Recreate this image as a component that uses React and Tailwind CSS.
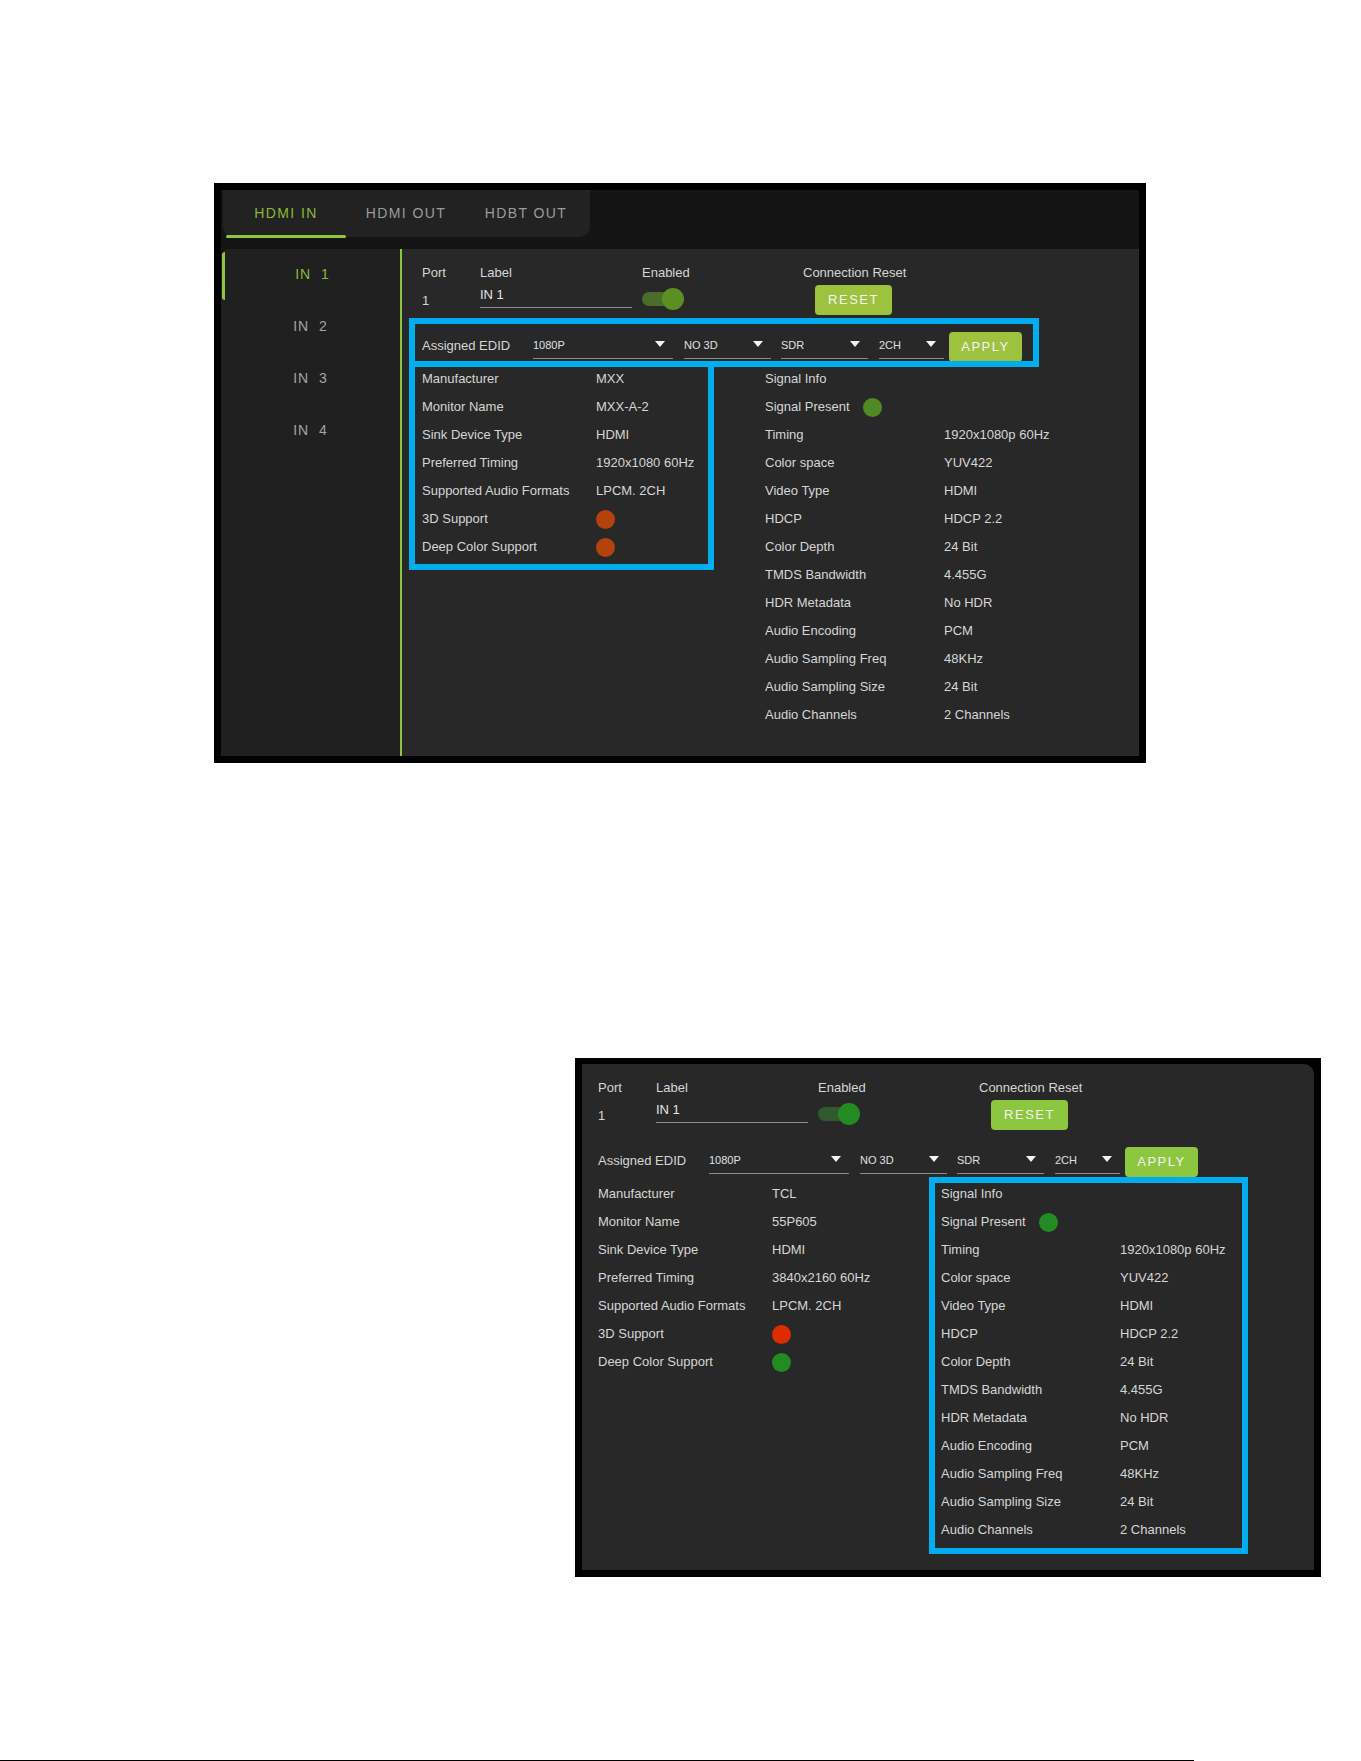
import React from 'react';

const FONT = { fontFamily: '"Liberation Sans", Arial, sans-serif' };

const TABS = ['HDMI IN', 'HDMI OUT', 'HDBT OUT'];
const INPUTS = ['IN 1', 'IN 2', 'IN 3', 'IN 4'];

const SIGNAL_INFO = [
  ['Timing', '1920x1080p 60Hz'],
  ['Color space', 'YUV422'],
  ['Video Type', 'HDMI'],
  ['HDCP', 'HDCP 2.2'],
  ['Color Depth', '24 Bit'],
  ['TMDS Bandwidth', '4.455G'],
  ['HDR Metadata', 'No HDR'],
  ['Audio Encoding', 'PCM'],
  ['Audio Sampling Freq', '48KHz'],
  ['Audio Sampling Size', '24 Bit'],
  ['Audio Channels', '2 Channels'],
];

// two looks of the same panel: older olive palette and the newer one
const THEMES = {
  old: {
    button: 'bg-[#9cc23e]',
    track: 'bg-[#4a6e2a]',
    knob: 'bg-[#5b8f24]',
    red: 'bg-[#b5420c]',
    green: 'bg-[#4f8a23]',
  },
  new: {
    button: 'bg-[#8dc63f]',
    track: 'bg-[#2f5a2f]',
    knob: 'bg-[#228b22]',
    red: 'bg-[#dd2c00]',
    green: 'bg-[#238b23]',
  },
};

function Arrow() {
  return (
    <svg width="10" height="6" viewBox="0 0 10 6" className="shrink-0">
      <polygon points="0,0 10,0 5,6" fill="#f2f2f2" />
    </svg>
  );
}

function Dropdown({ value, width }) {
  return (
    <div className={`${width} h-[27px] flex items-start justify-between border-b border-[#8a8a8a] pr-[8px]`}>
      <span className="text-[11px] leading-[26px] text-[#e0e0e0]">{value}</span>
      <div className="mt-[9px]">
        <Arrow />
      </div>
    </div>
  );
}

function Dot({ color }) {
  return <span className={`inline-block w-[19px] h-[19px] rounded-full ${color}`} />;
}

function Toggle({ theme }) {
  return (
    <div className="relative w-[42px] h-[22px]">
      <div className={`absolute left-0 top-[4px] w-[36px] h-[14px] rounded-full ${theme.track}`} />
      <div className={`absolute right-0 top-0 w-[22px] h-[22px] rounded-full ${theme.knob}`} />
    </div>
  );
}

function PortPanel({ theme, edid, signalBox, padLeft }) {
  return (
    <div className={`relative h-full pt-[16px] ${padLeft} text-[13px] text-[#d6d6d6]`}>
      {/* port header */}
      <div className="flex">
        <div className="w-[58px]">
          <div className="leading-[16px]">Port</div>
          <div className="mt-[12px] leading-[16px]">1</div>
        </div>
        <div className="w-[162px]">
          <div className="leading-[16px]">Label</div>
          <div className="mt-[5px] w-[152px] h-[22px] border-b border-[#8a8a8a] leading-[18px] text-[#e4e4e4]">IN 1</div>
        </div>
        <div className="w-[161px]">
          <div className="leading-[16px]">Enabled</div>
          <div className="mt-[7px]">
            <Toggle theme={theme} />
          </div>
        </div>
        <div>
          <div className="leading-[16px]">Connection Reset</div>
          <button className={`mt-[4px] ml-[12px] w-[77px] h-[30px] rounded-[4px] ${theme.button} text-[13px] tracking-[1.5px] text-[#f4f4f4]`}>
            RESET
          </button>
        </div>
      </div>

      {/* EDID row */}
      <div className="mt-[17px] flex items-start h-[30px]">
        <div className="w-[111px] leading-[28px]">Assigned EDID</div>
        <Dropdown value="1080P" width="w-[140px]" />
        <div className="w-[11px]" />
        <Dropdown value="NO 3D" width="w-[87px]" />
        <div className="w-[10px]" />
        <Dropdown value="SDR" width="w-[87px]" />
        <div className="w-[11px]" />
        <Dropdown value="2CH" width="w-[65px]" />
        <div className="w-[5px]" />
        <button className={`w-[73px] h-[30px] rounded-[4px] ${theme.button} text-[13px] tracking-[1.5px] text-[#f4f4f4]`}>
          APPLY
        </button>
      </div>

      {/* info columns */}
      <div className="mt-[3px] flex">
        <div className="w-[343px]">
          {edid.map(([k, v]) => (
            <div key={k} className="flex h-[28px] items-center">
              <span className="w-[174px]">{k}</span>
              {typeof v === 'string' ? <span>{v}</span> : <Dot color={v.color} />}
            </div>
          ))}
        </div>
        <div>
          <div className="h-[28px] flex items-center">Signal Info</div>
          <div className="h-[28px] flex items-center">
            <span>Signal Present</span>
            <span className="ml-[13px] flex">
              <Dot color={theme.green} />
            </span>
          </div>
          {SIGNAL_INFO.map(([k, v]) => (
            <div key={k} className="flex h-[28px] items-center">
              <span className="w-[179px]">{k}</span>
              <span>{v}</span>
            </div>
          ))}
        </div>
      </div>

      {signalBox}
    </div>
  );
}

export default function App() {
  const oldT = THEMES.old;
  const newT = THEMES.new;

  const edidOld = [
    ['Manufacturer', 'MXX'],
    ['Monitor Name', 'MXX-A-2'],
    ['Sink Device Type', 'HDMI'],
    ['Preferred Timing', '1920x1080 60Hz'],
    ['Supported Audio Formats', 'LPCM. 2CH'],
    ['3D Support', { color: oldT.red }],
    ['Deep Color Support', { color: oldT.red }],
  ];

  const edidNew = [
    ['Manufacturer', 'TCL'],
    ['Monitor Name', '55P605'],
    ['Sink Device Type', 'HDMI'],
    ['Preferred Timing', '3840x2160 60Hz'],
    ['Supported Audio Formats', 'LPCM. 2CH'],
    ['3D Support', { color: newT.red }],
    ['Deep Color Support', { color: newT.green }],
  ];

  return (
    <div className="w-[1361px] h-[1761px] bg-white flex flex-col" style={FONT}>
      {/* first screenshot: full HDMI IN page */}
      <div className="ml-[214px] mt-[183px] w-[932px] h-[580px] border-[7px] border-black bg-[#141414] flex flex-col">
        <div className="h-[59px]">
          <div className="ml-[2px] w-[367px] h-[47px] pl-[3px] flex bg-[#222222] rounded-b-[10px]">
            {TABS.map((t, i) => (
              <div key={t} className="relative w-[120px] h-full flex items-center justify-center">
                <span className={`text-[14px] tracking-[1.4px] ${i === 0 ? 'text-[#8ab93a]' : 'text-[#9b9b9b]'}`}>{t}</span>
                {i === 0 && <div className="absolute left-0 right-0 bottom-[-1px] h-[3px] rounded-full bg-[#8dc63f]" />}
              </div>
            ))}
          </div>
        </div>
        <div className="flex flex-1">
          <div className="w-[179px] bg-[#202020] rounded-tl-[8px] pt-[3px] flex flex-col gap-[4px]">
            {INPUTS.map((name, i) => (
              <div
                key={name}
                className={`h-[48px] pb-[4px] flex items-center justify-center text-[14px] tracking-[1px] ${
                  i === 0 ? 'ml-[1px] border-l-[3px] border-[#8dc63f] rounded-l-[3px] text-[#8ab93a]' : 'text-[#a3a3a3]'
                }`}
              >
                {name.replace(' ', '\u00a0\u00a0')}
              </div>
            ))}
          </div>
          <div className="w-[2px] bg-[#8dc63f]" />
          <div className="flex-1 bg-[#282828]">
            <PortPanel
              theme={oldT}
              edid={edidOld}
              padLeft="pl-[20px]"
              signalBox={
                <>
                  <div className="absolute left-[7px] top-[69px] w-[630px] h-[49px] border-[6px] border-[#00aeef]" />
                  <div className="absolute left-[7px] top-[112px] w-[305px] h-[209px] border-[6px] border-[#00aeef]" />
                </>
              }
            />
          </div>
        </div>
      </div>

      {/* second screenshot: panel only, signal info highlighted */}
      <div className="ml-[575px] mt-[295px] w-[746px] h-[519px] bg-black pt-[6px] px-[7px] pb-[7px]">
        <div className="h-full bg-[#282828] rounded-tr-[10px]">
          <PortPanel
            theme={newT}
            edid={edidNew}
            padLeft="pl-[16px]"
            signalBox={
              <div className="absolute left-[347px] top-[113px] w-[319px] h-[377px] border-[6px] border-[#00aeef]" />
            }
          />
        </div>
      </div>

      <div className="mt-auto w-[1194px] h-[1px] bg-black" />
    </div>
  );
}
